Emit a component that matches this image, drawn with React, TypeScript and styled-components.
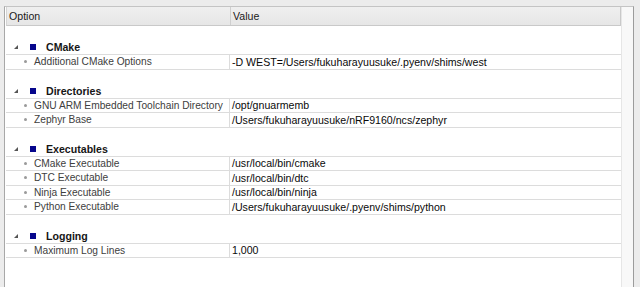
import React from "react";
import styled, { createGlobalStyle } from "styled-components";

const GlobalStyle = createGlobalStyle`
  html, body { margin: 0; padding: 0; background: #ececec; }
  body { font-family: "Liberation Sans", Arial, sans-serif; }
`;

const Frame = styled.div`
  width: 640px;
  height: 287px;
  box-sizing: border-box;
  padding: 6px 6px 0 4px;
  overflow: hidden;
  display: flex;
`;

const Panel = styled.div`
  flex: 1;
  display: flex;
  border-left: 1px solid #a8a8a8;
  border-top: 1px solid #c4c4c4;
  border-right: 1px solid #9c9c9c;
  background: #ffffff;
  min-height: 300px;
`;

const Table = styled.div`
  flex: 1;
  display: flex;
  flex-direction: column;
  padding-left: 1px;
`;

const Track = styled.div`
  width: 11px;
  background: #f8f8f8;
  border-left: 1px solid #e6e6e6;
`;

const Header = styled.div`
  display: grid;
  grid-template-columns: 224px 1fr;
  height: 19px;
  box-sizing: border-box;
  background: linear-gradient(#efefef, #e6e6e6);
  border-bottom: 1px solid #c9c9c9;
  border-right: 1px solid #c9c9c9;
  border-left: 1px solid #d4d4d4;
`;

const HeaderCell = styled.div<{ $last?: boolean }>`
  display: flex;
  align-items: center;
  padding-left: 2px;
  font-size: 10.6px;
  color: #1a1a1a;
  border-right: ${(p) => (p.$last ? "none" : "1px solid #cfcfcf")};
`;

const Row = styled.div<{ $kind: "blank" | "group" | "item" }>`
  display: grid;
  grid-template-columns: 224px 1fr;
  height: 14.5px;
  box-sizing: border-box;
  border-bottom: ${(p) => (p.$kind === "blank" ? "none" : "1px solid #dcdcdc")};
`;

const GroupCell = styled.div`
  grid-column: 1 / span 2;
  display: flex;
  align-items: center;
  font-size: 10.6px;
  font-weight: bold;
  color: #161616;
`;

const Twisty = styled.svg`
  width: 4px;
  height: 4px;
  margin-left: 8px;
  flex: none;
`;

const Square = styled.span`
  width: 6px;
  height: 6px;
  background: #06068c;
  margin-left: 12px;
  margin-right: 10px;
  flex: none;
`;

const LabelCell = styled.div`
  display: flex;
  align-items: center;
  font-size: 10.2px;
  color: #404040;
  white-space: nowrap;
  overflow: hidden;
  border-right: 1px solid #dcdcdc;
`;

const Bullet = styled.span`
  width: 3px;
  height: 3px;
  border-radius: 50%;
  background: #9a9a9a;
  margin-left: 18px;
  margin-right: 7px;
  flex: none;
`;

const ValueCell = styled.div`
  display: flex;
  align-items: center;
  padding-left: 2px;
  font-size: 10.6px;
  color: #0a0a0a;
  white-space: nowrap;
`;

type Group = { name: string; items: [string, string][] };

const groups: Group[] = [
  { name: "CMake", items: [["Additional CMake Options", "-D WEST=/Users/fukuharayuusuke/.pyenv/shims/west"]] },
  {
    name: "Directories",
    items: [
      ["GNU ARM Embedded Toolchain Directory", "/opt/gnuarmemb"],
      ["Zephyr Base", "/Users/fukuharayuusuke/nRF9160/ncs/zephyr"],
    ],
  },
  {
    name: "Executables",
    items: [
      ["CMake Executable", "/usr/local/bin/cmake"],
      ["DTC Executable", "/usr/local/bin/dtc"],
      ["Ninja Executable", "/usr/local/bin/ninja"],
      ["Python Executable", "/Users/fukuharayuusuke/.pyenv/shims/python"],
    ],
  },
  { name: "Logging", items: [["Maximum Log Lines", "1,000"]] },
];

export default function App() {
  return (
    <>
      <GlobalStyle />
      <Frame>
        <Panel>
          <Table>
            <Header>
              <HeaderCell>Option</HeaderCell>
              <HeaderCell $last>Value</HeaderCell>
            </Header>
            {groups.map((g) => (
              <React.Fragment key={g.name}>
                <Row $kind="blank" />
                <Row $kind="group">
                  <GroupCell>
                    <Twisty viewBox="0 0 4 4">
                      <polygon points="4,0 4,4 0,4" fill="#555" />
                    </Twisty>
                    <Square />
                    {g.name}
                  </GroupCell>
                </Row>
                {g.items.map(([k, v]) => (
                  <Row $kind="item" key={k}>
                    <LabelCell>
                      <Bullet />
                      {k}
                    </LabelCell>
                    <ValueCell>{v}</ValueCell>
                  </Row>
                ))}
              </React.Fragment>
            ))}
          </Table>
          <Track />
        </Panel>
      </Frame>
    </>
  );
}
